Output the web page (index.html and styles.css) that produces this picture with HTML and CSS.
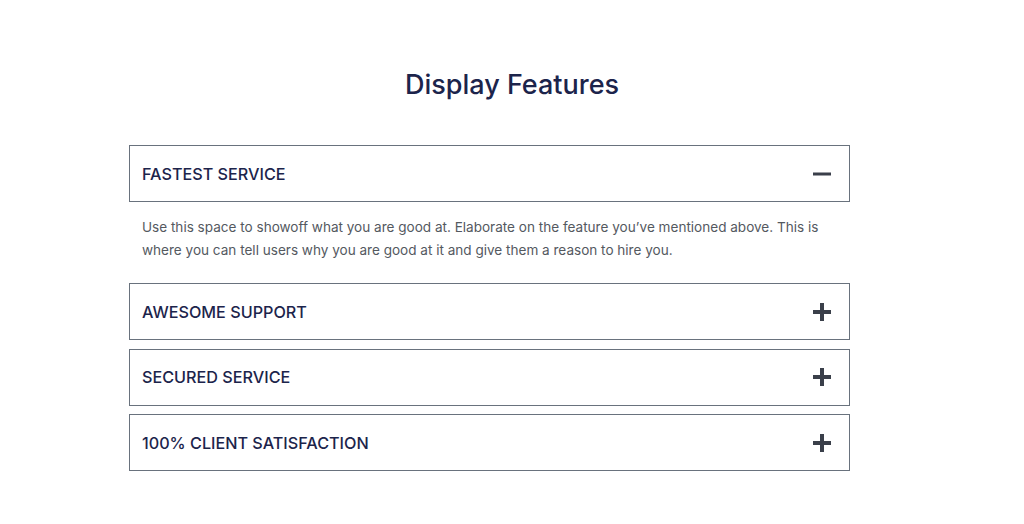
FILE: index.html
```html
<!DOCTYPE html>
<html lang="en">
<head>
<meta charset="utf-8">
<title>Display Features</title>
<link rel="stylesheet" href="styles.css">
</head>
<body>
<main class="page">
  <h2 class="title">Display Features</h2>
  <div class="accordion">
    <div class="item open">
      <div class="head">
        <span class="label">FASTEST SERVICE</span>
        <svg class="icon" width="18" height="18" viewBox="0 0 18 18"><rect x="0" y="7.5" width="18" height="3" fill="currentColor"/></svg>
      </div>
      <div class="panel">Use this space to showoff what you are good at. Elaborate on the feature you’ve mentioned above. This is where you can tell users why you are good at it and give them a reason to hire you.</div>
    </div>
    <div class="item">
      <div class="head">
        <span class="label">AWESOME SUPPORT</span>
        <svg class="icon" width="18" height="18" viewBox="0 0 18 18"><rect x="0" y="7" width="18" height="4" fill="currentColor"/><rect x="7" y="0" width="4" height="18" fill="currentColor"/></svg>
      </div>
    </div>
    <div class="item">
      <div class="head">
        <span class="label">SECURED SERVICE</span>
        <svg class="icon" width="18" height="18" viewBox="0 0 18 18"><rect x="0" y="7" width="18" height="4" fill="currentColor"/><rect x="7" y="0" width="4" height="18" fill="currentColor"/></svg>
      </div>
    </div>
    <div class="item">
      <div class="head">
        <span class="label">100% CLIENT SATISFACTION</span>
        <svg class="icon" width="18" height="18" viewBox="0 0 18 18"><rect x="0" y="7" width="18" height="4" fill="currentColor"/><rect x="7" y="0" width="4" height="18" fill="currentColor"/></svg>
      </div>
    </div>
  </div>
</main>
</body>
</html>
```
FILE: styles.css
```css
* { box-sizing: border-box; }
html, body { margin: 0; padding: 0; background: #fff; }
body { font-family: Inter, "Open Sans", "Liberation Sans", sans-serif; }
.page { padding-top: 65px; }
.title {
  margin: 0;
  text-align: center;
  font-size: 27px;
  line-height: 40px;
  font-weight: 500;
  color: #1c244b;
  letter-spacing: 0;
}
.accordion {
  margin: 40px 0 0 129px;
  width: 721px;
  display: flex;
  flex-direction: column;
  gap: 8.5px;
}
.head {
  height: 57px;
  border: 1px solid #69727d;
  display: flex;
  align-items: center;
  justify-content: space-between;
  padding: 0 18px 0 12px;
}
.label {
  font-size: 16.2px;
  font-weight: 500;
  color: #1c244b;
  letter-spacing: 0;
}
.icon { color: #3a3f4a; display: block; }
.panel {
  padding: 14px 13px 12.5px 13px;
  font-size: 13.55px;
  line-height: 23px;
  color: #54595f;
}
```
